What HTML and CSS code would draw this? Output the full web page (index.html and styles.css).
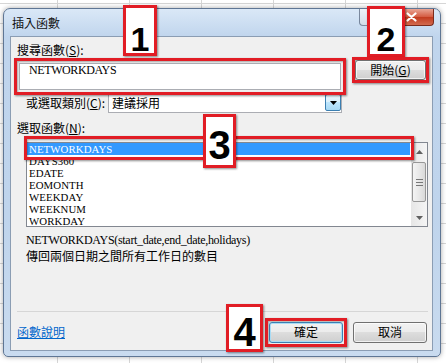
FILE: index.html
```html
<!DOCTYPE html>
<html lang="zh-Hant">
<head>
    <meta charset="UTF-8">
    <title>插入函數</title>
    <link rel="stylesheet" href="styles.css">
</head>
<body>

<div class="window">
    <div class="titlebar">
        <span class="title">插入函數</span>
        <div class="caption-btns">
            <span class="cap-help"></span>
            <span class="cap-close">
                <svg width="11" height="10" viewBox="0 0 11 10"><path d="M1.5 1.5l8 7M9.5 1.5l-8 7" stroke="#fff" stroke-width="2.2" stroke-linecap="round"/></svg>
            </span>
        </div>
    </div>

    <div class="client">
        <div class="label">搜尋函數(<u>S</u>):</div>

        <div class="search-row">
            <div class="mark search-mark">
                <div class="textbox">NETWORKDAYS</div>
            </div>
            <div class="mark go-mark">
                <button class="btn go">開始(<u>G</u>)</button>
            </div>
        </div>

        <div class="cat-row">
            <span class="cat-label">或選取類別(<u>C</u>):</span>
            <div class="combo">
                <span>建議採用</span>
                <span class="drop">
                    <svg width="7" height="4" viewBox="0 0 7 4"><path d="M0 0h7L3.5 4z" fill="#000"/></svg>
                </span>
            </div>
        </div>

        <div class="label label-fn">選取函數(<u>N</u>):</div>

        <div class="list-wrap">
            <div class="list">
                <ul class="items">
                    <li class="sel">NETWORKDAYS</li>
                    <li>DAYS360</li>
                    <li>EDATE</li>
                    <li>EOMONTH</li>
                    <li>WEEKDAY</li>
                    <li>WEEKNUM</li>
                    <li>WORKDAY</li>
                </ul>
                <div class="scrollbar">
                    <span class="arrow">
                        <svg width="7" height="4" viewBox="0 0 7 4"><path d="M0 4h7L3.5 0z" fill="#606060"/></svg>
                    </span>
                    <span class="thumb">
                        <svg width="7" height="7" viewBox="0 0 7 7"><path d="M0 .5h7M0 3.5h7M0 6.5h7" stroke="#777"/></svg>
                    </span>
                    <span class="arrow arrow-down">
                        <svg width="7" height="4" viewBox="0 0 7 4"><path d="M0 0h7L3.5 4z" fill="#606060"/></svg>
                    </span>
                </div>
            </div>
            <div class="mark row-mark"></div>
        </div>

        <div class="sig">NETWORKDAYS(start_date,end_date,holidays)</div>
        <div class="desc">傳回兩個日期之間所有工作日的數目</div>

        <div class="sep"></div>

        <div class="footer">
            <a class="help-link" href="#">函數說明</a>
            <div class="mark ok-mark">
                <button class="btn ok">確定</button>
            </div>
            <button class="btn cancel">取消</button>
        </div>
    </div>
</div>

<div class="num n1">1</div>
<div class="num n2">2</div>
<div class="num n3">3</div>
<div class="num n4">4</div>

</body>
</html>
```

FILE: styles.css
```css
body {
    position: relative;
    margin: 0;
    width: 446px;
    height: 363px;
    overflow: hidden;
    font-family: "Noto Sans CJK TC", "Liberation Sans", sans-serif;
    font-size: 12px;
    color: #000;
    background-color: #fff;
    /* spreadsheet grid behind the dialog */
    background-image:
        linear-gradient(to right, #d6d6d6 1px, transparent 1px),
        linear-gradient(to bottom, #d6d6d6 1px, transparent 1px);
    background-size: 72px 20px;
    background-position: 57px 3px;
}

/* window frame */
.window {
    margin: 8px 0 0 3px;
    width: 438px;
    height: 349px;
    box-sizing: border-box;
    display: flex;
    flex-direction: column;
    padding: 0 7px 5px 6px;
    border: 1px solid #5f7694;
    border-radius: 7px 7px 5px 5px;
    background: linear-gradient(#dae8f7, #c0d5ed 28px, #bfd4ec 60%, #c9dbef);
    box-shadow: 0 0 5px rgba(0, 0, 0, 0.35);
}
.titlebar {
    display: flex;
    align-items: flex-start;
    height: 27px;
    flex: none;
}
.title {
    padding-left: 2px;
    line-height: 27px;
    color: #111;
}
.caption-btns {
    display: flex;
    margin-left: auto;
    margin-right: -1px;
}
.cap-help, .cap-close {
    height: 17px;
    box-sizing: border-box;
    border: 1px solid rgba(50, 70, 100, 0.6);
    border-top: none;
}
.cap-help {
    width: 30px;
    border-right: none;
    border-radius: 0 0 0 4px;
    background: linear-gradient(#eef2f7, #d3dde9);
}
.cap-close {
    width: 45px;
    display: flex;
    align-items: center;
    justify-content: center;
    border-color: #7b2b1c;
    border-radius: 0 0 4px 0;
    background: linear-gradient(#e9a595, #d45a40 50%, #c23b1f 51%, #d26a4e);
}

/* dialog body */
.client {
    flex: none;
    height: 315px;
    box-sizing: border-box;
    border: 1px solid #8b9db3;
    background: #f0f0f0;
}
.label {
    margin: 5px 0 0 6px;
    height: 16px;
    line-height: 16px;
}
.label-fn {
    margin-top: 7px;
}

/* red annotation outlines */
.mark {
    border: 3px solid #e11d25;
    box-shadow: 1px 1px 2px rgba(0, 0, 0, 0.45), inset 1px 1px 2px rgba(0, 0, 0, 0.3);
}

.search-row {
    position: relative;
    z-index: 1;
    display: flex;
    align-items: flex-start;
    gap: 6px;
    margin-left: 3px;
}
.search-mark {
    width: 332px;
    height: 37px;
    box-sizing: border-box;
    padding: 2px;
}
.textbox {
    height: 100%;
    box-sizing: border-box;
    padding-left: 9px;
    border: 1px solid #abadb3;
    background: #fff;
    font-family: "Liberation Serif", serif;
    line-height: 13px;
    letter-spacing: -0.4px;
}
.go-mark {
    margin-top: -1px;
}

.btn {
    display: block;
    height: 21px;
    padding: 0;
    box-sizing: border-box;
    border: 1px solid #707070;
    border-radius: 3px;
    background: linear-gradient(#f2f2f2, #ebebeb 50%, #dddddd 50%, #cfcfcf);
    box-shadow: inset 0 0 0 1px rgba(255, 255, 255, 0.7);
    font-family: "Noto Sans CJK TC", sans-serif;
    font-size: 12px;
    line-height: 18px;
    color: #000;
}
.go {
    width: 71px;
    height: 20px;
}

.cat-row {
    display: flex;
    align-items: center;
    height: 21px;
    margin: -3px 0 0 15px;
}
.cat-label {
    flex: none;
    width: 82px;
    line-height: 16px;
}
.combo {
    display: flex;
    align-items: center;
    width: 234px;
    height: 21px;
    box-sizing: border-box;
    padding-left: 3px;
    border: 1px solid #abadb3;
    background: #fff;
}
.drop {
    display: flex;
    align-items: center;
    justify-content: center;
    margin-left: auto;
    width: 16px;
    height: 17px;
    box-sizing: border-box;
    border: 1px solid #3c7fb1;
    border-radius: 2px;
    background: linear-gradient(#eaf6fd, #d9f0fc 50%, #bee6fd 50%, #a7d9f5);
}

/* function list */
.list-wrap {
    position: relative;
    margin: 6px 0 0 15px;
    width: 402px;
    height: 85px;
}
.list {
    display: flex;
    height: 100%;
    box-sizing: border-box;
    border: 1px solid #828790;
    background: #fff;
    overflow: hidden;
}
.items {
    flex: 1;
    margin: 0;
    padding: 0;
    list-style: none;
}
.items li {
    height: 12px;
    padding-left: 2px;
    margin-right: 1px;
    font-family: "Liberation Serif", serif;
    font-size: 10.8px;
    line-height: 12px;
    letter-spacing: 0.1px;
    white-space: nowrap;
}
.items li.sel {
    background: #3399ff;
    color: #fff;
}
.scrollbar {
    display: flex;
    flex-direction: column;
    align-items: center;
    width: 16px;
    flex: none;
    background: linear-gradient(to right, #e6e6e6, #f5f5f5);
}
.arrow {
    display: flex;
    align-items: center;
    justify-content: center;
    height: 17px;
}
.arrow-down {
    margin-top: auto;
}
.thumb {
    display: flex;
    align-items: center;
    justify-content: center;
    margin-top: 2px;
    width: 14px;
    height: 40px;
    box-sizing: border-box;
    border: 1px solid #979797;
    border-radius: 2px;
    background: linear-gradient(to right, #f4f4f4, #e8e8e8 50%, #d9d9d9);
}
.row-mark {
    position: absolute;
    left: -2px;
    top: -6px;
    width: 390px;
    height: 24px;
    box-sizing: border-box;
}

.sig {
    margin: 5px 0 0 15px;
    line-height: 16px;
    font-family: "Liberation Serif", serif;
    letter-spacing: -0.3px;
}
.desc {
    margin-left: 15px;
    line-height: 16px;
}
.sep {
    margin: 47px 0 0 6px;
    width: 411px;
    border-top: 1px solid #d6d6d6;
}

.footer {
    display: flex;
    align-items: center;
    height: 30px;
    margin-top: 5px;
    padding: 0 5px 0 6px;
}
.help-link {
    margin-right: auto;
    line-height: 16px;
    color: #0066cc;
    text-decoration: underline;
}
.ok-mark {
    padding: 1px;
}
.ok {
    width: 74px;
    border-color: #3c7fb1;
    box-shadow: inset 0 0 0 1px #a9dcf5;
}
.cancel {
    width: 74px;
    margin-left: 6px;
}

/* numbered callouts */
.num {
    position: absolute;
    box-sizing: border-box;
    border: 3px solid #e11d25;
    background: #fff;
    text-align: center;
    font-family: "Liberation Sans", Arial, sans-serif;
    font-weight: bold;
    font-size: 34px;
    line-height: 34px;
    box-shadow: 1px 1px 2px rgba(0, 0, 0, 0.45);
}
.n1 {
    left: 123px;
    top: 5px;
    width: 34px;
    height: 51px;
    padding-top: 14px;
}
.n2 {
    left: 367px;
    top: 6px;
    width: 38px;
    height: 51px;
    padding-top: 13px;
}
.n3 {
    left: 203px;
    top: 114px;
    width: 33px;
    height: 54px;
    padding-top: 8px;
    font-size: 40px;
    line-height: 40px;
}
.n4 {
    left: 226px;
    top: 304px;
    width: 37px;
    height: 48px;
    padding-top: 5px;
    font-size: 40px;
    line-height: 40px;
}
```
